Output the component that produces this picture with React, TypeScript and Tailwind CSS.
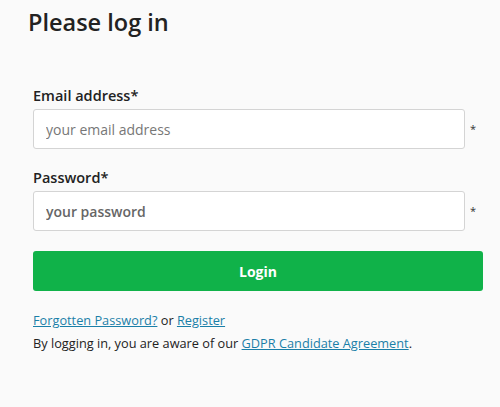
import React from "react";

export default function App() {
  const font = { fontFamily: '"Open Sans", "Liberation Sans", sans-serif' };
  return (
    <div className="min-h-[407px] w-[500px] bg-[#fafafa] text-[#222]" style={font}>
      <div className="pl-[28px] pt-[8px]">
        <h1 className="text-[23.5px] font-semibold leading-[28px] text-[#222]">Please log in</h1>
      </div>
      <form className="pl-[33px] pr-[17px] pt-[51px]" onSubmit={(e) => e.preventDefault()}>
        <label className="block text-[14.5px] font-semibold leading-[18px] text-[#222]">Email address*</label>
        <div className="mt-[4px] flex items-center">
          <input
            className="h-[40px] w-[432px] rounded-[3px] border border-[#d4d4d4] bg-white px-[12px] text-[14px] text-[#222] placeholder:text-[#777] outline-none"
            placeholder="your email address"
          />
          <span className="ml-[5px] text-[11px] text-[#333]">*</span>
        </div>
        <label className="mt-[20px] block text-[14.5px] font-semibold leading-[18px] text-[#222]">Password*</label>
        <div className="mt-[4px] flex items-center">
          <input
            type="password"
            className="h-[40px] w-[432px] rounded-[3px] border border-[#d4d4d4] bg-white px-[12px] text-[14px] text-[#222] placeholder:text-[#666] placeholder:font-semibold outline-none"
            placeholder="your password"
          />
          <span className="ml-[5px] text-[11px] text-[#333]">*</span>
        </div>
        <button
          type="submit"
          className="mt-[20px] h-[40px] w-[450px] rounded-[3px] bg-[#10b249] text-[14px] font-bold text-white"
        >
          Login
        </button>
        <p className="mt-[20px] text-[12.75px] leading-[18px] text-[#222]">
          <a href="#" className="text-[#1a7fa8] underline">Forgotten Password?</a> or{" "}
          <a href="#" className="text-[#1a7fa8] underline">Register</a>
        </p>
        <p className="mt-[5px] text-[12.75px] leading-[18px] text-[#222]">
          By logging in, you are aware of our{" "}
          <a href="#" className="text-[#1a7fa8] underline">GDPR Candidate Agreement</a>.
        </p>
      </form>
    </div>
  );
}
